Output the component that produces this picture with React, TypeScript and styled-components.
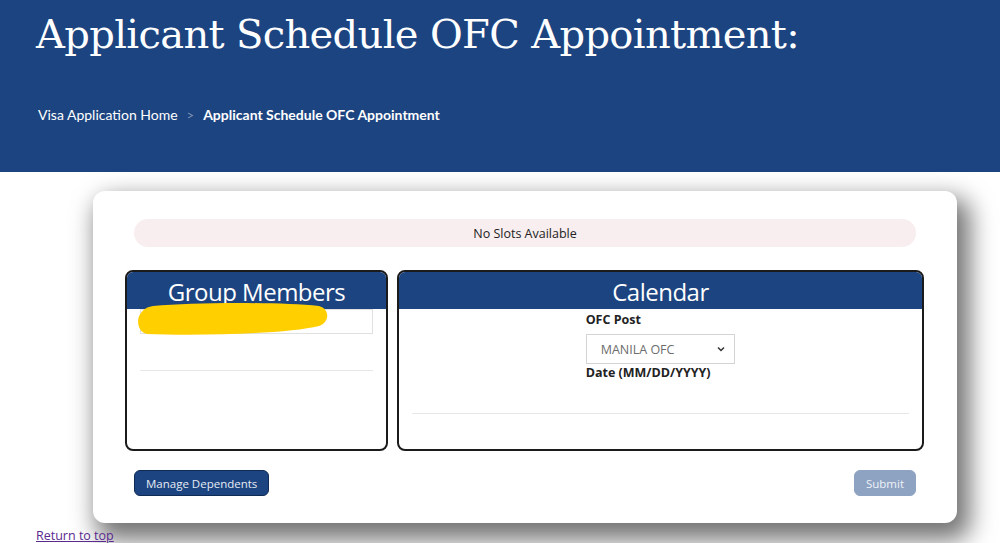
import React from "react"
import styled, { createGlobalStyle } from "styled-components"

const GlobalStyle = createGlobalStyle`
  body {
    margin: 0;
    background: #ffffff;
    font-family: "Open Sans", "Noto Sans", sans-serif;
  }
`

const Header = styled.header`
  height: 172px;
  background: #1c4480;
  padding: 0 36px;
  box-sizing: border-box;
  overflow: hidden;
`

const Title = styled.h1`
  margin: 0;
  padding-top: 8px;
  font-family: "DejaVu Serif", "Liberation Serif", serif;
  font-weight: 400;
  font-size: 40px;
  line-height: 52px;
  color: #ffffff;
  letter-spacing: -0.65px;
`

const Breadcrumb = styled.nav`
  margin-top: 46px;
  display: flex;
  align-items: center;
  gap: 9px;
  padding-left: 2px;
  font-family: Lato, "Open Sans", sans-serif;
  font-size: 14px;
  color: #e9eef6;
`

const Crumb = styled.span<{ $current?: boolean }>`
  font-weight: ${(p) => (p.$current ? 700 : 400)};
  color: #ffffff;
`

const Separator = styled.span`
  color: #7f93b5;
  font-size: 13px;
`

const Card = styled.section`
  margin: 19px 0 0 93px;
  width: 864px;
  box-sizing: border-box;
  background: #ffffff;
  border-radius: 12px;
  padding: 28px 33px 27px 32px;
  box-shadow: 8px 12px 24px 5px rgba(0, 0, 0, 0.55);
`

const Alert = styled.div`
  margin: 0 8px 23px 9px;
  height: 28px;
  border-radius: 14px;
  background: #f8eeef;
  display: flex;
  align-items: center;
  justify-content: center;
  font-size: 12.5px;
  color: #222;
`

const Panels = styled.div`
  display: grid;
  grid-template-columns: 263px 1fr;
  gap: 9px;
`

const Panel = styled.div`
  height: 181px;
  box-sizing: border-box;
  border: 2px solid #1b1b1b;
  border-radius: 8px;
  overflow: hidden;
  display: flex;
  flex-direction: column;
`

const PanelTitle = styled.div`
  height: 37px;
  flex-shrink: 0;
  background: #1c4480;
  color: #ffffff;
  font-size: 24px;
  line-height: 40px;
  text-align: center;
  letter-spacing: -0.5px;
`

const PanelBody = styled.div`
  padding: 0 13px;
  flex: 1;
`

const MemberSlot = styled.div`
  position: relative;
  height: 25px;
  border: 1px solid #e0e0e0;
  box-sizing: border-box;
`

const Redaction = styled.svg`
  position: absolute;
  left: -4px;
  top: -6px;
  overflow: visible;
`

const Rule = styled.hr<{ $top: number }>`
  margin: ${(p) => p.$top}px 0 0;
  border: none;
  border-top: 1px solid #e8e8e8;
`

const FormGrid = styled.div`
  display: grid;
  grid-template-columns: 1fr 1fr 1fr;
`

const FormColumn = styled.div`
  grid-column: 2;
  padding-left: 8px;
`

const Label = styled.div<{ $gap?: number }>`
  font-size: 12.5px;
  font-weight: 700;
  color: #222;
  line-height: 18px;
  margin-top: ${(p) => p.$gap ?? 0}px;
`

const SelectBox = styled.div`
  margin-top: 5px;
  width: 149px;
  height: 30px;
  box-sizing: border-box;
  border: 1px solid #d4d4d4;
  display: flex;
  align-items: center;
  justify-content: space-between;
  padding: 0 8px 0 14px;
  font-size: 12.5px;
  color: #6c6c6c;
`

const Buttons = styled.div`
  margin-top: 19px;
  padding: 0 8px 0 9px;
  display: flex;
  justify-content: space-between;
`

const Button = styled.button<{ $disabled?: boolean }>`
  height: 26px;
  padding: 0 11px;
  border-radius: 6px;
  border: 1px solid ${(p) => (p.$disabled ? "#8ea2c2" : "#0f2a55")};
  background: ${(p) => (p.$disabled ? "#8ea2c2" : "#1c4480")};
  color: ${(p) => (p.$disabled ? "#eef2f8" : "#e6ecf6")};
  font-family: "Open Sans", "Noto Sans", sans-serif;
  font-size: 11.5px;
`

const ReturnLink = styled.a`
  display: inline-block;
  margin: 0 0 0 36px;
  font-size: 12.5px;
  line-height: 12px;
  color: #5a2a8e;
  text-decoration: underline;
`

export default function App() {
  return (
    <>
      <GlobalStyle />
      <Header>
        <Title>Applicant Schedule OFC Appointment:</Title>
        <Breadcrumb>
          <Crumb>Visa Application Home</Crumb>
          <Separator>&gt;</Separator>
          <Crumb $current>Applicant Schedule OFC Appointment</Crumb>
        </Breadcrumb>
      </Header>
      <Card>
        <Alert>No Slots Available</Alert>
        <Panels>
          <Panel>
            <PanelTitle>Group Members</PanelTitle>
            <PanelBody>
              <MemberSlot>
                <Redaction width="192" height="32" viewBox="0 0 192 32">
                  <path
                    d="M16 2 C60 -2 140 -2 182 2 C193 5 193 18 182 22 C150 30 60 32 10 30 C0 28 -1 14 4 9 C7 5 10 3 16 2 Z"
                    fill="#ffcf00"
                  />
                </Redaction>
              </MemberSlot>
              <Rule $top={36} />
            </PanelBody>
          </Panel>
          <Panel>
            <PanelTitle>Calendar</PanelTitle>
            <PanelBody>
              <FormGrid>
                <FormColumn>
                  <Label $gap={2}>OFC Post</Label>
                  <SelectBox>
                    MANILA OFC
                    <svg width="10" height="10" viewBox="0 0 10 10">
                      <path d="M2 3.5 L5 6.5 L8 3.5" fill="none" stroke="#333" strokeWidth="1.5" />
                    </svg>
                  </SelectBox>
                  <Label>Date (MM/DD/YYYY)</Label>
                </FormColumn>
              </FormGrid>
              <Rule $top={31} />
            </PanelBody>
          </Panel>
        </Panels>
        <Buttons>
          <Button>Manage Dependents</Button>
          <Button $disabled>Submit</Button>
        </Buttons>
      </Card>
      <ReturnLink href="#">Return to top</ReturnLink>
    </>
  )
}
